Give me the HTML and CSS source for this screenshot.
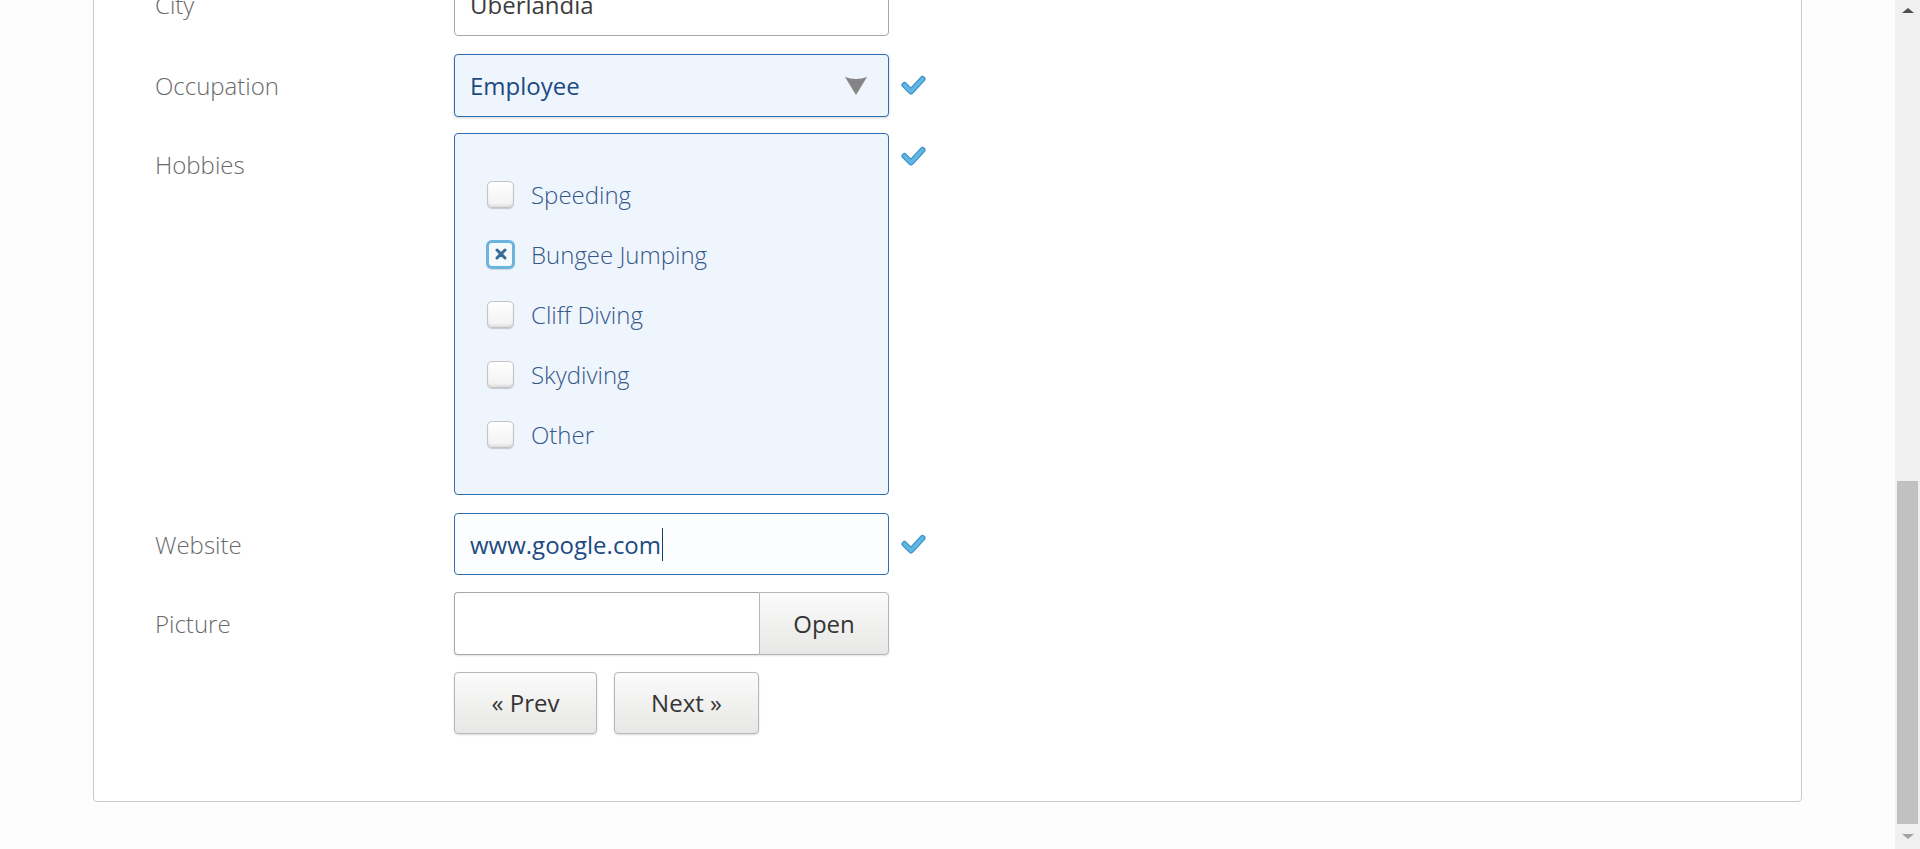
FILE: index.html
```html
<!DOCTYPE html>
<html lang="en">
<head>
<meta charset="utf-8">
<title>Wizard form</title>
<link rel="stylesheet" href="styles.css">
</head>
<body>
<div class="viewport">
  <div class="page">
    <div class="panel">
      <div class="form">
        <div class="row">
          <div class="label">City</div>
          <div class="field input plain">Uberlandia</div>
          <div></div>
        </div>
        <div class="row row-occ">
          <div class="label">Occupation</div>
          <div class="field input select">
            <span>Employee</span>
            <svg class="arrow" width="22" height="18" viewBox="0 0 22 18"><path d="M0 0 Q11 4 22 0 L11 18 Z" fill="#858585"/></svg>
          </div>
          <svg class="check" width="25" height="21" viewBox="0 0 25 21"><path d="M3.5 10 L10 16.5 L21.5 4" fill="none" stroke="#3a92c8" stroke-width="6" stroke-linecap="round" stroke-linejoin="round"/><path d="M3.5 10 L10 16.5 L21.5 4" fill="none" stroke="#62b6e2" stroke-width="3.6" stroke-linecap="round" stroke-linejoin="round"/></svg>
        </div>
        <div class="row">
          <div class="label">Hobbies</div>
          <div class="field hobbies">
            <div class="hobby"><span class="box"></span><span class="htext">Speeding</span></div>
            <div class="hobby"><span class="box checked"><svg width="14" height="14" viewBox="0 0 14 14"><path d="M3 3 L11 11 M11 3 L3 11" stroke="#3b6a92" stroke-width="3" stroke-linecap="round"/></svg></span><span class="htext">Bungee Jumping</span></div>
            <div class="hobby"><span class="box"></span><span class="htext">Cliff Diving</span></div>
            <div class="hobby"><span class="box"></span><span class="htext">Skydiving</span></div>
            <div class="hobby"><span class="box"></span><span class="htext">Other</span></div>
          </div>
          <svg class="check high" width="25" height="21" viewBox="0 0 25 21"><path d="M3.5 10 L10 16.5 L21.5 4" fill="none" stroke="#3a92c8" stroke-width="6" stroke-linecap="round" stroke-linejoin="round"/><path d="M3.5 10 L10 16.5 L21.5 4" fill="none" stroke="#62b6e2" stroke-width="3.6" stroke-linecap="round" stroke-linejoin="round"/></svg>
        </div>
        <div class="row row-web">
          <div class="label">Website</div>
          <div class="field input focus">www.google.com<span class="caret"></span></div>
          <svg class="check" width="25" height="21" viewBox="0 0 25 21"><path d="M3.5 10 L10 16.5 L21.5 4" fill="none" stroke="#3a92c8" stroke-width="6" stroke-linecap="round" stroke-linejoin="round"/><path d="M3.5 10 L10 16.5 L21.5 4" fill="none" stroke="#62b6e2" stroke-width="3.6" stroke-linecap="round" stroke-linejoin="round"/></svg>
        </div>
        <div class="row">
          <div class="label">Picture</div>
          <div class="field file">
            <div class="file-input"></div>
            <div class="btn open">Open</div>
          </div>
          <div></div>
        </div>
        <div class="row">
          <div></div>
          <div class="buttons">
            <div class="btn nav prev">« Prev</div>
            <div class="btn nav next">Next »</div>
          </div>
          <div></div>
        </div>
      </div>
    </div>
  </div>
  <div class="scrollbar">
    <div class="sb-up"></div>
    <div class="sb-track"><div class="sb-thumb"></div></div>
    <div class="sb-down"></div>
  </div>
</div>
</body>
</html>
```

FILE: styles.css
```css
html, body {
  margin: 0;
  padding: 0;
  height: 100%;
  overflow: hidden;
  background: #fdfdfd;
  font-family: "Open Sans", "Liberation Sans", sans-serif;
}

.viewport {
  display: flex;
  height: 849px;
  overflow: hidden;
}

.page {
  flex: 1;
  min-width: 0;
  padding: 0 93px;
}

.panel {
  margin-top: -60px;
  border: 1px solid #cacaca;
  border-radius: 4px;
  background: #ffffff;
  padding: 32px 0 67px 61px;
}

.form {
  display: flex;
  flex-direction: column;
  gap: 17px;
}

.row {
  display: grid;
  grid-template-columns: 299px 435px auto;
  align-items: start;
}

.row-occ {
  margin-top: 1px;
  margin-bottom: -1px;
}

.row-web {
  margin-top: 1px;
  margin-bottom: -1px;
}

.label {
  font-size: 24px;
  font-weight: 300;
  color: #6a6a6a;
  line-height: 63px;
}

.field {
  box-sizing: border-box;
  border-radius: 4px;
}

.input {
  height: 63px;
  border: 1px solid #a8a8a8;
  padding: 0 15px;
  font-size: 24px;
  line-height: 61px;
  color: #3c3c3c;
  display: flex;
  align-items: center;
}

.plain {
  background: #ffffff;
}

.select {
  background: #eef5fd;
  border-color: #2e6db4;
  color: #1d4a82;
  justify-content: space-between;
  box-shadow: 0 1px 3px rgba(0, 0, 0, 0.18);
  padding-right: 21px;
}

.arrow {
  display: block;
}

.focus {
  height: 62px;
  background: #fbfdff;
  border-color: #2e6db4;
  color: #1d4a82;
}

.caret {
  display: inline-block;
  width: 1px;
  height: 33px;
  background: #1d3a66;
  margin-left: 1px;
}

.check {
  display: block;
  margin: 21px 0 0 12px;
}

.check.high {
  margin-top: 13px;
}

.hobbies {
  height: 362px;
  border: 1px solid #2e6db4;
  background: #eef5fd;
  padding: 30px 0 0 32px;
  display: flex;
  flex-direction: column;
}

.hobby {
  height: 60px;
  display: flex;
  align-items: center;
  gap: 17px;
}

.box {
  box-sizing: border-box;
  width: 27px;
  height: 27px;
  border: 1px solid #c4c4c4;
  border-radius: 5px;
  background: linear-gradient(#ffffff, #f1f1f1);
  box-shadow: inset 0 -2px 2px rgba(0, 0, 0, 0.08), 0 1px 1px rgba(0, 0, 0, 0.18);
  display: flex;
  align-items: center;
  justify-content: center;
}

.box.checked {
  width: 29px;
  height: 29px;
  margin: 0 -1px;
  border: 3px solid #6ab4dd;
  border-radius: 6px;
  background: #f4f9fd;
  box-shadow: 0 1px 1px rgba(0, 0, 0, 0.12);
}

.htext {
  font-size: 24px;
  font-weight: 300;
  color: #36578a;
}

.file {
  display: flex;
  height: 63px;
  border-radius: 4px;
  box-shadow: 0 1px 2px rgba(0, 0, 0, 0.12);
}

.file-input {
  box-sizing: border-box;
  width: 305px;
  height: 63px;
  border: 1px solid #a8a8a8;
  border-right: none;
  border-radius: 4px 0 0 4px;
  background: #ffffff;
}

.btn {
  box-sizing: border-box;
  border: 1px solid #b6b6b6;
  border-radius: 4px;
  background: linear-gradient(#fbfbfb, #e7e7e5);
  color: #353535;
  font-size: 24px;
  display: flex;
  align-items: center;
  justify-content: center;
}

.open {
  width: 130px;
  height: 63px;
  border-radius: 0 4px 4px 0;
}

.buttons {
  display: flex;
  gap: 17px;
}

.nav {
  height: 62px;
  padding-bottom: 2px;
  box-shadow: 0 1px 2px rgba(0, 0, 0, 0.15);
}

.prev {
  width: 143px;
}

.next {
  width: 145px;
}

.scrollbar {
  width: 25px;
  flex: none;
  background: #f0f0f0;
  display: flex;
  flex-direction: column;
  align-items: center;
}

.sb-up {
  width: 0;
  height: 0;
  margin-top: 8px;
  border-left: 6px solid transparent;
  border-right: 6px solid transparent;
  border-bottom: 5px solid #505050;
}

.sb-track {
  flex: 1;
  width: 21px;
  position: relative;
}

.sb-thumb {
  position: absolute;
  left: 0;
  right: 0;
  top: 468px;
  height: 343px;
  background: #c1c1c1;
}

.sb-down {
  width: 0;
  height: 0;
  margin-bottom: 10px;
  border-left: 6px solid transparent;
  border-right: 6px solid transparent;
  border-top: 5px solid #a3a3a3;
}
```
